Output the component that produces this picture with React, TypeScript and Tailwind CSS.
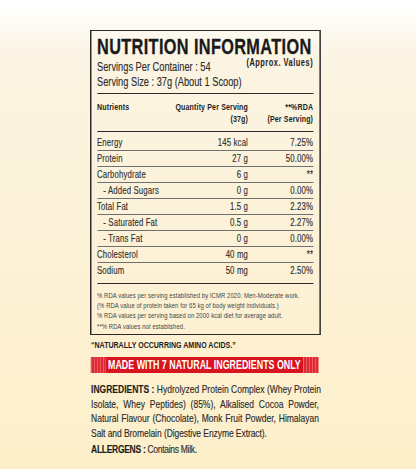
const rows: { name: string; qty: string; rda: string; sub?: boolean }[] = [
  { name: "Energy", qty: "145 kcal", rda: "7.25%" },
  { name: "Protein", qty: "27 g", rda: "50.00%" },
  { name: "Carbohydrate", qty: "6 g", rda: "**" },
  { name: "- Added Sugars", qty: "0 g", rda: "0.00%", sub: true },
  { name: "Total Fat", qty: "1.5 g", rda: "2.23%" },
  { name: "- Saturated Fat", qty: "0.5 g", rda: "2.27%", sub: true },
  { name: "- Trans Fat", qty: "0 g", rda: "0.00%", sub: true },
  { name: "Cholesterol", qty: "40 mg", rda: "**" },
  { name: "Sodium", qty: "50 mg", rda: "2.50%" },
];

const notes = [
  "% RDA values per serving established by ICMR 2020. Men-Moderate work.",
  "(% RDA value of protein taken for 65 kg of body weight individuals.)",
  "% RDA values per serving based on 2000 kcal diet for average adult.",
  "**% RDA values not established.",
];

// the label font is a condensed one; squeeze Liberation Sans horizontally to match
export default function App() {
  return (
    <div className="w-[416px] h-[469px] overflow-hidden bg-linear-to-b from-white from-[1%] via-[#fcf4e3] via-[12%] to-[#fdefc9] pt-[30px] pl-[90px] font-['Liberation_Sans',Arial,sans-serif] text-[#2a2a2a]">
      <div className="w-[312px] origin-top-left scale-x-[0.74]">
        <div className="border-y-[1.5px] border-x-[2px] border-[#2b2b2b] pl-[7.5px] pr-[8.5px] pt-[7.4px] pb-[2.5px]">
          <h1 className="text-[22px] leading-[18px] font-bold tracking-[0.5px] text-[#1a1a1a] whitespace-nowrap [-webkit-text-stroke:0.3px_#1a1a1a]">
            NUTRITION INFORMATION
          </h1>
          <div className="flex justify-between items-start">
            <div className="mt-[3.8px] text-[12.5px] leading-[15px] text-[#2e2e2e] [-webkit-text-stroke:0.15px_#2e2e2e]">
              <div>Servings Per Container : 54</div>
              <div>Serving Size : 37g (About 1 Scoop)</div>
            </div>
            <div className="mt-[1.6px] text-[10px] leading-[10px] font-bold tracking-[0.7px] text-[#222]">
              (Approx. Values)
            </div>
          </div>
          <div className="mt-[3px] border-t-[1.5px] border-[#2b2b2b]" />
          <div className="flex text-[9.5px] leading-[12px] font-bold tracking-[0.2px] text-[#222] pt-[7px] pb-[6px]">
            <div className="flex-1">Nutrients</div>
            <div className="w-[120px] text-right">
              <div>Quantity Per Serving</div>
              <div>(37g)</div>
            </div>
            <div className="w-[88px] text-right">
              <div>**%RDA</div>
              <div>(Per Serving)</div>
            </div>
          </div>
          <div className="border-t-[1.5px] border-[#2b2b2b] pt-[3px]">
            {rows.map((r, i) => (
              <div
                key={r.name}
                className={`flex h-[16px] items-center text-[10.5px] tracking-[0.2px] text-[#303030] [-webkit-text-stroke:0.15px_#303030] ${
                  i < rows.length - 1 ? "border-b border-[#707070]" : ""
                }`}
              >
                <div className={`flex-1 ${r.sub ? "pl-[8.5px]" : ""}`}>{r.name}</div>
                <div className="w-[120px] text-right">{r.qty}</div>
                <div className="w-[88px] text-right">{r.rda}</div>
              </div>
            ))}
          </div>
          <div className="mt-[3.5px] border-t-[1.5px] border-[#2b2b2b] pt-[7px]">
            {notes.map((n) => (
              <div key={n} className="text-[8px] leading-[10.3px] tracking-[0.1px] text-[#444] whitespace-nowrap">
                {n}
              </div>
            ))}
          </div>
        </div>
        <div className="mt-[3px] ml-[1.4px] text-[9.5px] leading-[14px] font-bold text-[#1c1c1c] whitespace-nowrap">
          &ldquo;NATURALLY OCCURRING AMINO ACIDS.&rdquo;
        </div>
        <div className="mt-[5px] ml-[1.4px] flex w-[308px] h-[16px]">
          <div className="w-[20px] bg-[repeating-linear-gradient(90deg,#ea5a63_0px,#ea5a63_1.4px,#dc2a35_1.4px,#dc2a35_4px)]" />
          <div className="flex-1 bg-[#d7141f] text-white text-[12px] leading-[16px] font-bold text-center whitespace-nowrap">
            MADE WITH 7 NATURAL INGREDIENTS ONLY
          </div>
          <div className="w-[21.5px] bg-[repeating-linear-gradient(90deg,#ea5a63_0px,#ea5a63_1.4px,#dc2a35_1.4px,#dc2a35_4px)]" />
        </div>
        <div className="mt-[8.75px] ml-[1.4px] w-[308px] text-[11.5px] leading-[14.5px] text-[#2a2a2a] [-webkit-text-stroke:0.15px_#2a2a2a]">
          <div className="text-justify [text-align-last:justify] whitespace-nowrap">
            <span className="font-bold text-[#1c1c1c]">INGREDIENTS :</span>
            {"  "}Hydrolyzed Protein Complex (Whey Protein
          </div>
          <div className="text-justify [text-align-last:justify]">
            Isolate, Whey Peptides) (85%), Alkalised Cocoa Powder,
          </div>
          <div className="text-justify [text-align-last:justify]">
            Natural Flavour (Chocolate), Monk Fruit Powder, Himalayan
          </div>
          <div className="tracking-[-0.1px]">Salt and Bromelain (Digestive Enzyme Extract).</div>
        </div>
        <div className="mt-[2.25px] ml-[1.4px] text-[11.5px] leading-[14px] tracking-[-0.4px] text-[#2a2a2a] whitespace-nowrap [-webkit-text-stroke:0.15px_#2a2a2a]">
          <span className="font-bold text-[#1c1c1c]">ALLERGENS :</span> Contains Milk.
        </div>
      </div>
    </div>
  );
}
